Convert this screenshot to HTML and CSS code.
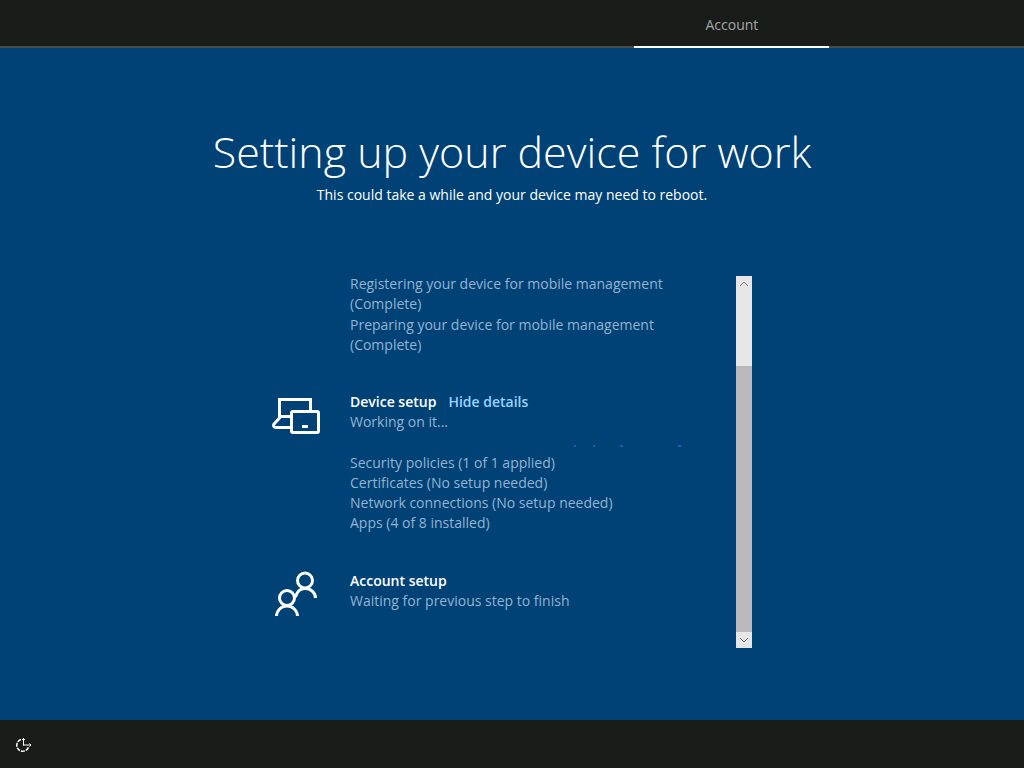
FILE: index.html
```html
<!DOCTYPE html>
<html lang="en">
<head>
    <meta charset="UTF-8">
    <meta name="viewport" content="width=device-width, initial-scale=1.0">
    <title>Setting up your device for work</title>
    <link rel="stylesheet" href="styles.css">
</head>
<body>
    <header class="topbar">
        <div class="tab">Account</div>
    </header>

    <main>
        <h1>Setting up your device for work</h1>
        <p class="subtitle">This could take a while and your device may need to reboot.</p>

        <div class="panel">
            <div class="steps">
                <section class="step">
                    <ul class="details">
                        <li>Registering your device for mobile management (Complete)</li>
                        <li>Preparing your device for mobile management (Complete)</li>
                    </ul>
                </section>

                <section class="step">
                    <svg class="step-icon" viewBox="0 0 48 48" fill="none" stroke="#fff" stroke-width="3">
                        <path d="M7.500 25V7.500h31V18"/>
                        <path d="M7 24.500h12M8 25.500l-6 6.500c-1 2 0 3.500 2 3.500h15" />
                        <rect x="19.500" y="19.500" width="27" height="21" rx="1.500"/>
                        <path d="M30 34.500h6"/>
                    </svg>
                    <div class="step-body">
                        <div class="step-head">
                            <h2>Device setup</h2>
                            <a href="#device-details">Hide details</a>
                        </div>
                        <p>Working on it...</p>
                        <svg class="progress" viewBox="0 0 352 21" fill="#0f65b5">
                            <rect x="224" y="13" width="2" height="2"/>
                            <rect x="243" y="13" width="2" height="2"/>
                            <rect x="270" y="13" width="3" height="2"/>
                            <rect x="328" y="13" width="3" height="2"/>
                        </svg>
                        <ul id="device-details">
                            <li>Security policies (1 of 1 applied)</li>
                            <li>Certificates (No setup needed)</li>
                            <li>Network connections (No setup needed)</li>
                            <li>Apps (4 of 8 installed)</li>
                        </ul>
                    </div>
                </section>

                <section class="step">
                    <svg class="step-icon" viewBox="0 0 48 48" fill="none" stroke="#fff" stroke-width="3">
                        <circle cx="33" cy="9.500" r="7.500"/>
                        <circle cx="15" cy="27" r="7.500"/>
                        <path d="M23.500 26C25 20.500 28.500 17.500 33 17.500c6 0 10.500 4.500 10.500 9.500"/>
                        <path d="M4.500 45C5 39 9.500 35 15 35S25 39 25.500 45"/>
                    </svg>
                    <div class="step-body">
                        <h2>Account setup</h2>
                        <p>Waiting for previous step to finish</p>
                    </div>
                </section>
            </div>

            <div class="scrollbar">
                <button type="button" aria-label="Scroll up">
                    <svg viewBox="0 0 16 16"><path d="M4 10l4-4 4 4"/></svg>
                </button>
                <div class="thumb"></div>
                <div class="track"></div>
                <button type="button" aria-label="Scroll down">
                    <svg viewBox="0 0 16 16"><path d="M4 6l4 4 4-4"/></svg>
                </button>
            </div>
        </div>
    </main>

    <footer class="bottombar">
        <button type="button" aria-label="Ease of Access">
            <svg viewBox="0 0 18 18" fill="none" stroke="#fff">
                <path d="M6 4.500A6 6 0 1 0 13.500 12" stroke-width="1.500" stroke-dasharray="4 1"/>
                <path d="M8.500 3v7.500M8 10h8M7 5l1.500-1.500L10 5M14.500 8.500l1.500 1.500-1.500 1.500"/>
            </svg>
        </button>
    </footer>
</body>
</html>
```

FILE: styles.css
```css
* {
    box-sizing: border-box;
}
body {
    margin: 0;
    min-height: 100vh;
    display: flex;
    flex-direction: column;
    background-color: #004275;
    color: #fff;
    font-family: "Open Sans", "Noto Sans", sans-serif;
    font-size: 14px;
    line-height: 20px;
}
h1, h2, p, ul {
    margin: 0;
    padding: 0;
}
ul {
    list-style: none;
}
button {
    padding: 0;
    border: none;
    background: none;
}
svg {
    display: block;
}

/* Top bar */
.topbar {
    display: flex;
    justify-content: flex-end;
    height: 48px;
    padding-right: 19%;
    background-color: #191d1a;
    border-bottom: 2px solid #4c4c4c;
}
.tab {
    flex: none;
    width: 195px;
    height: 48px;
    line-height: 50px;
    text-align: center;
    color: #a6a6a6;
    border-bottom: 2px solid #fff;
}

/* Content */
main {
    flex: 1;
    display: flex;
    flex-direction: column;
    align-items: center;
    padding: 72px 20px;
}
h1 {
    font-size: 43px;
    font-weight: 300;
    line-height: 64px;
    text-align: center;
}
.subtitle {
    line-height: 22px;
    text-align: center;
}
.panel {
    display: flex;
    width: 100%;
    max-width: 480px;
    margin-top: 68px;
}
.steps {
    flex: 1;
    display: flex;
    flex-direction: column;
    gap: 37px;
    color: #94b3d3;
}
.step {
    display: flex;
    gap: 30px;
}
.details {
    display: flex;
    flex-direction: column;
    gap: 1px;
    padding: 0 40px 0 78px;
}
.step-icon {
    flex: none;
    width: 48px;
    height: 48px;
}
.step-body {
    flex: 1;
    padding-bottom: 1px;
}
.step-head {
    display: flex;
    gap: 12px;
}
h2 {
    font-size: 14px;
    font-weight: 600;
    color: #fff;
}
.step-head a {
    font-weight: 600;
    color: #99d3ff;
    text-decoration: none;
}
.progress {
    width: 352px;
    height: 21px;
}

/* Scrollbar */
.scrollbar {
    display: flex;
    flex-direction: column;
    width: 16px;
    height: 372px;
    margin-top: 2px;
    background-color: #bab8bb;
}
.scrollbar button {
    height: 16px;
    background-color: #e6e6e6;
}
.scrollbar svg {
    width: 16px;
    height: 16px;
    fill: none;
    stroke: #777;
}
.thumb {
    height: 74px;
    background-color: #e6e6e6;
}
.track {
    flex: 1;
}

/* Bottom bar */
.bottombar {
    display: flex;
    align-items: center;
    height: 48px;
    padding: 0 15px;
    background-color: #191d1a;
}
.bottombar svg {
    width: 18px;
    height: 18px;
}
```
